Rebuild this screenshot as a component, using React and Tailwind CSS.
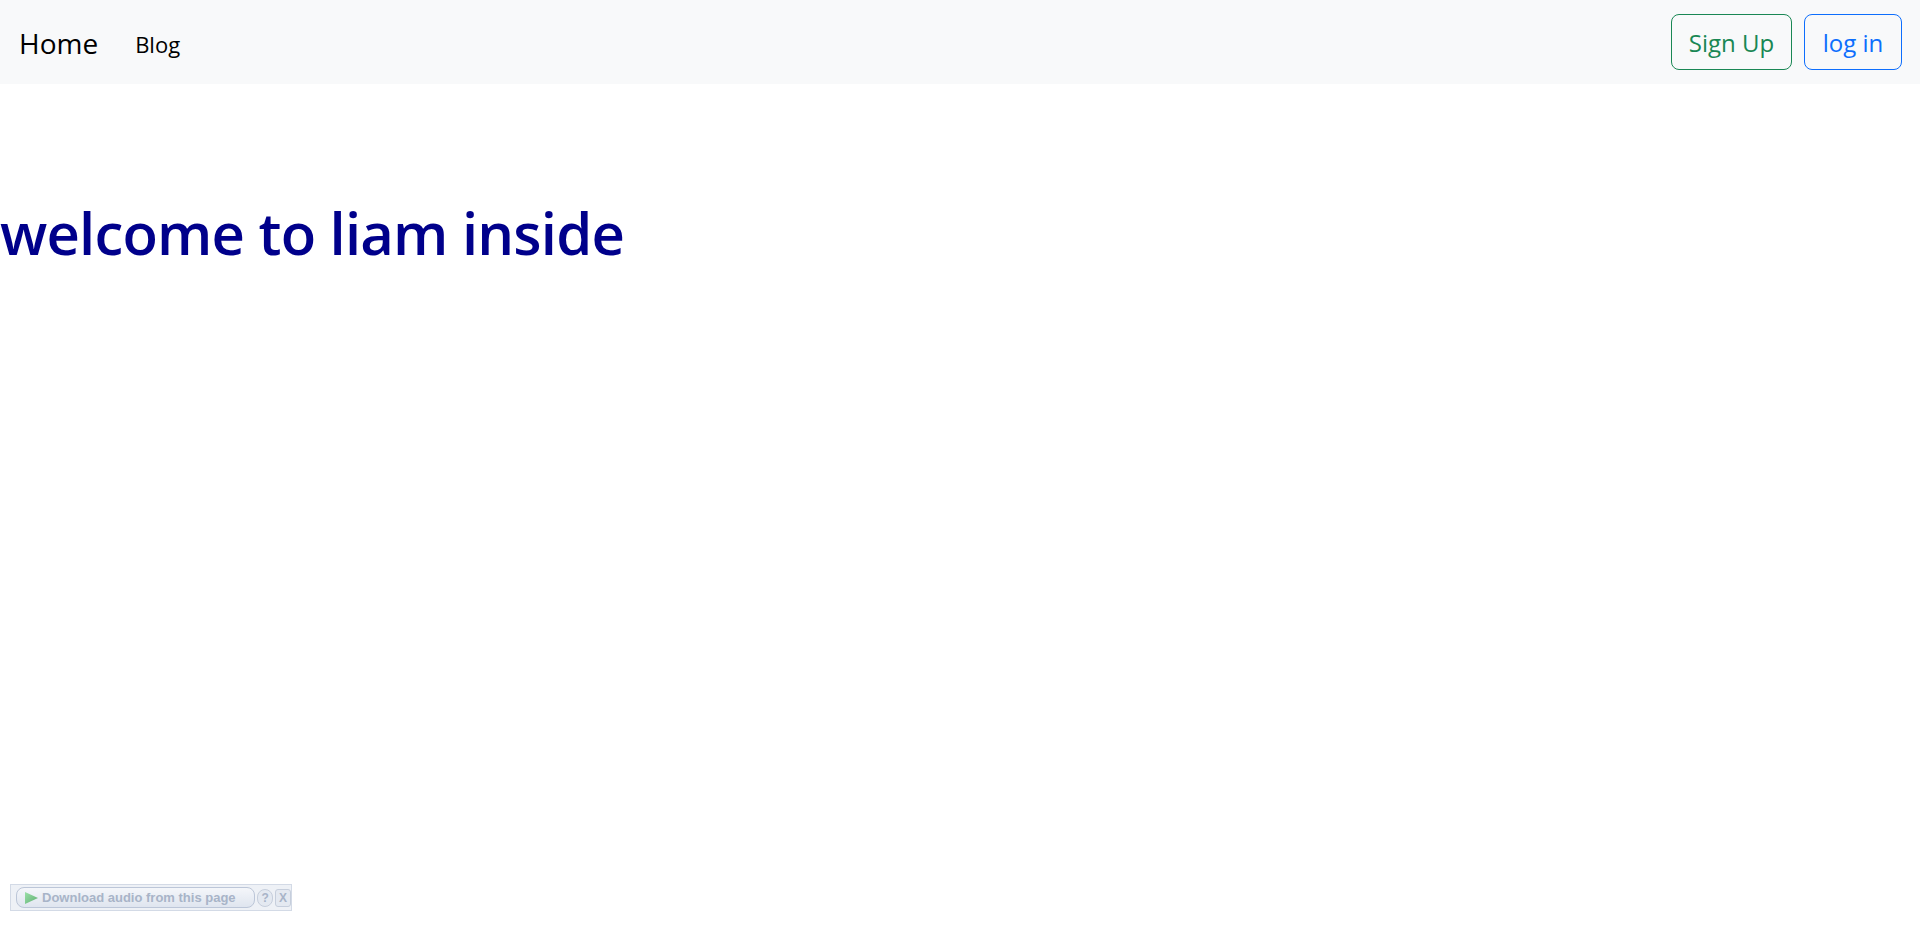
import React from 'react';

function AudioBar() {
  return (
    <div className="fixed left-[10px] top-[884px] flex h-[27px] w-[282px] items-center gap-[2px] border border-[#d3dae6] bg-[#eef1f6] pl-[5px] font-['Liberation_Sans',Arial,sans-serif]">
      <div className="flex h-[21px] w-[240px] items-center gap-[3px] rounded-[8px] border border-[#bcc6d8] bg-gradient-to-b from-[#f4f6fa] to-[#dfe5ef] pl-[7px]">
        <svg width="15" height="14" viewBox="0 0 15 14">
          <defs>
            <linearGradient id="play" x1="0" y1="0" x2="1" y2="1">
              <stop offset="0" stopColor="#9be0a8" />
              <stop offset="1" stopColor="#5faf72" />
            </linearGradient>
          </defs>
          <path d="M1 1 L14 7 L1 13 Z" fill="url(#play)" />
        </svg>
        <span className="text-[13px] font-bold leading-none text-[#a8b4c8]">Download audio from this page</span>
      </div>
      <div className="flex h-[18px] w-[16px] items-center justify-center rounded-full border border-[#c6cedc] bg-[#e4e9f1] text-[12px] font-bold leading-none text-[#a8b4c8]">?</div>
      <div className="flex h-[18px] w-[16px] items-center justify-center rounded-[3px] border border-[#c6cedc] bg-[#e4e9f1] text-[12px] font-bold leading-none text-[#a8b4c8]">X</div>
    </div>
  );
}

export default function App() {
  return (
    <div className="min-h-screen bg-white font-['Open_Sans','Noto_Sans',sans-serif]">
      {/* navbar */}
      <nav className="flex h-[84px] items-center justify-between bg-[#f8f9fa] pl-[19px] pr-[18px]">
        <div className="flex items-center">
          <a className="mt-[2px] text-[28px] leading-none text-black">Home</a>
          <a className="ml-[37px] mt-[3px] text-[22px] leading-none text-black">Blog</a>
        </div>
        <div className="flex items-center gap-[12px]">
          <button className="h-[56px] w-[121px] rounded-[8px] border border-[#198754] pt-[2px] text-[24px] text-[#198754]">Sign Up</button>
          <button className="h-[56px] w-[98px] rounded-[8px] border border-[#0d6efd] pt-[2px] text-[24px] text-[#0d6efd]">log in</button>
        </div>
      </nav>

      <h1 className="mt-[114px] text-[58px] font-semibold leading-[1.2] tracking-[-0.8px] text-[#00008b]">welcome to liam inside</h1>

      <AudioBar />
    </div>
  );
}
